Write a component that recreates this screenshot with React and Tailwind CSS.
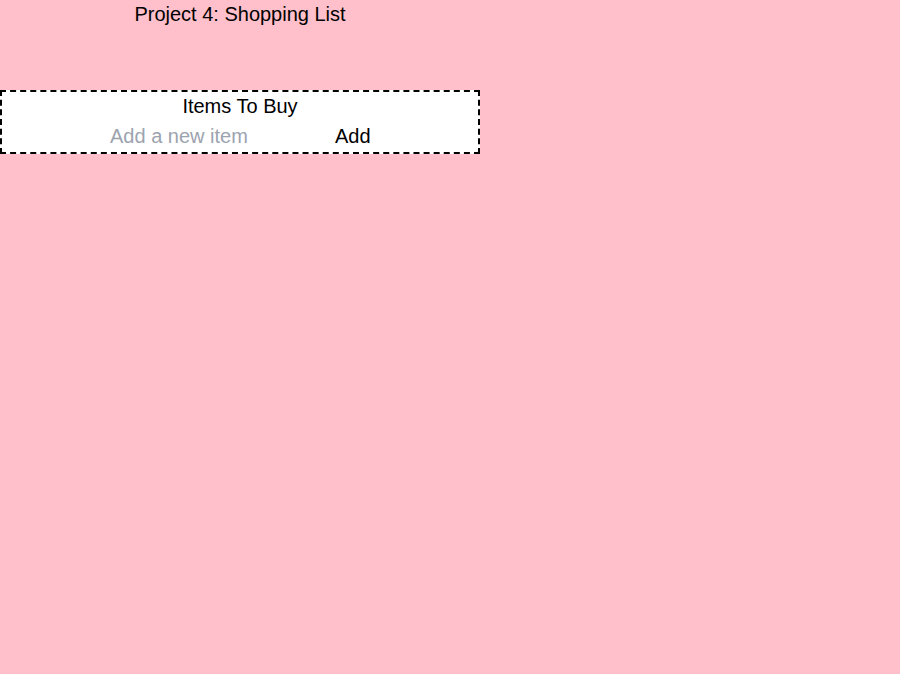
import React, { useState } from "react";

export default function App() {
  const [item, setItem] = useState("")
  const [items, setItems] = useState([])

  const handleAdd = function () {
    if (item === "") return
    setItems([...items, item])
    setItem("")
  }

  return (
    <div className="min-h-screen bg-[#ffc0cb] text-black font-['Liberation_Sans',Arial,sans-serif]">
      <div className="w-[480px] text-center">
        <h1 className="text-xl leading-[28px] mb-[62px]">Project 4: Shopping List</h1>
        <div className="border-2 border-dashed border-black bg-white">
          <h2 className="text-xl leading-[28px]">Items To Buy</h2>
          <ul>
            { items.map((it, i) => (<li key={ i } className="text-xl">{ it }</li>))}
          </ul>
          <div className="flex pl-[106px]">
            <input
              className="w-[220px] h-[32px] px-[2px] text-xl outline-none bg-white placeholder:text-[#9ca3af]"
              placeholder="Add a new item"
              value={ item }
              onChange={ (e) => setItem(e.target.value) }
            />
            <button className="px-[7px] text-xl leading-[23px]" onClick={ handleAdd }>
              Add
            </button>
          </div>
        </div>
      </div>
    </div>
  )
}
